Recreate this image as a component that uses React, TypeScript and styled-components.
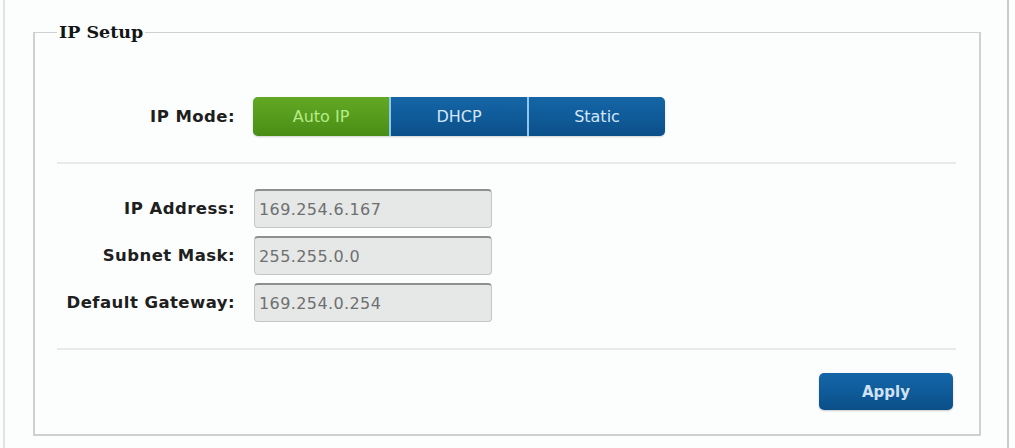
import React from 'react';
import styled, { createGlobalStyle } from 'styled-components';

const GlobalStyle = createGlobalStyle`
  html, body {
    margin: 0;
    padding: 0;
    background: #fcfefe;
  }
  body {
    font-family: 'DejaVu Sans', Verdana, sans-serif;
  }
`;

type Mode = 'auto' | 'dhcp' | 'static';

const modes: { id: Mode; label: string }[] = [
  { id: 'auto', label: 'Auto IP' },
  { id: 'dhcp', label: 'DHCP' },
  { id: 'static', label: 'Static' },
];

const fields = [
  { label: 'IP Address:', value: '169.254.6.167' },
  { label: 'Subnet Mask:', value: '255.255.0.0' },
  { label: 'Default Gateway:', value: '169.254.0.254' },
];

export default function App() {
  const [mode, setMode] = React.useState<Mode>('auto');

  return (
    <Page>
      <GlobalStyle />
      <Frame>
        <Legend>IP Setup</Legend>

        <ModeRow>
          <Label>IP Mode:</Label>
          <Segmented>
            {modes.map((m) => (
              <SegButton
                key={m.id}
                type="button"
                $active={mode === m.id}
                onClick={() => setMode(m.id)}
              >
                {m.label}
              </SegButton>
            ))}
          </Segmented>
        </ModeRow>

        <Divider />

        <Fields>
          {fields.map((f) => (
            <FieldRow key={f.label}>
              <Label>{f.label}</Label>
              <TextInput value={f.value} readOnly />
            </FieldRow>
          ))}
        </Fields>

        <Divider />

        <Actions>
          <ApplyButton type="button">Apply</ApplyButton>
        </Actions>
      </Frame>
    </Page>
  );
}

const Page = styled.div`
  margin-left: 3px;
  width: 1006px;
  height: 448px;
  border-left: 2px solid #e2e4e4;
  border-right: 2px solid #c9cbcb;
  padding: 20px 26px 0 28px;
  box-sizing: border-box;
`;

const Frame = styled.fieldset`
  margin: 0;
  padding: 0 23px 24px 22px;
  border: 2px solid #cfd1d1;
  border-top-width: 1px;
  min-width: 0;
`;

const Legend = styled.legend`
  margin-left: 0;
  padding: 0 2px;
  font-family: 'DejaVu Serif', 'Liberation Serif', serif;
  font-weight: bold;
  font-size: 17.5px;
  line-height: 24px;
  color: #141616;
`;

const Label = styled.div`
  width: 178px;
  flex-shrink: 0;
  text-align: right;
  font-family: 'DejaVu Sans', Verdana, sans-serif;
  font-weight: bold;
  font-size: 16.5px;
  letter-spacing: 0.45px;
  color: #1e2020;
`;

const ModeRow = styled.div`
  display: flex;
  align-items: center;
  gap: 18px;
  margin-top: 53px;
`;

const Segmented = styled.div`
  display: flex;
  gap: 2px;
  background: #8cc8ee;
  border-radius: 5px;
  box-shadow: 0 1px 2px rgba(0, 0, 0, 0.18);
`;

const SegButton = styled.button<{ $active: boolean }>`
  width: 136px;
  height: 39px;
  border: none;
  margin: 0;
  padding: 0;
  font-family: 'DejaVu Sans', Verdana, sans-serif;
  font-size: 16px;
  cursor: pointer;
  color: ${(p) => (p.$active ? '#b6ec88' : '#d4e6f6')};
  background: ${(p) =>
    p.$active
      ? 'linear-gradient(#62a823, #559a1c 55%, #4a8d16)'
      : 'linear-gradient(#1565a6, #0f5a98 55%, #0b4f88)'};

  &:first-child {
    border-radius: 5px 0 0 5px;
  }
  &:last-child {
    border-radius: 0 5px 5px 0;
  }
`;

const Divider = styled.hr`
  margin: 26px 0 0 0;
  border: none;
  height: 2px;
  background: #e8eaea;
`;

const Fields = styled.div`
  display: flex;
  flex-direction: column;
  gap: 8px;
  margin-top: 25px;
`;

const FieldRow = styled.div`
  display: flex;
  align-items: center;
  gap: 19px;
`;

const TextInput = styled.input`
  width: 238px;
  height: 39px;
  box-sizing: border-box;
  padding: 0 4px;
  border: 1px solid #c4c6c6;
  border-top: 2px solid #8e9090;
  border-radius: 4px;
  background: #e6e7e7;
  font-family: 'DejaVu Sans', Verdana, sans-serif;
  font-size: 16px;
  letter-spacing: 0.4px;
  color: #6e7070;
  outline: none;
`;

const Actions = styled.div`
  display: flex;
  justify-content: flex-end;
  margin-top: 23px;
  padding-right: 3px;
`;

const ApplyButton = styled.button`
  width: 134px;
  height: 37px;
  border: none;
  border-radius: 5px;
  background: linear-gradient(#1566a8, #0f5a98 55%, #0b4f88);
  box-shadow: 0 1px 2px rgba(0, 0, 0, 0.2);
  color: #cfe3f5;
  font-family: 'DejaVu Sans', Verdana, sans-serif;
  font-weight: bold;
  font-size: 15px;
  cursor: pointer;
`;
